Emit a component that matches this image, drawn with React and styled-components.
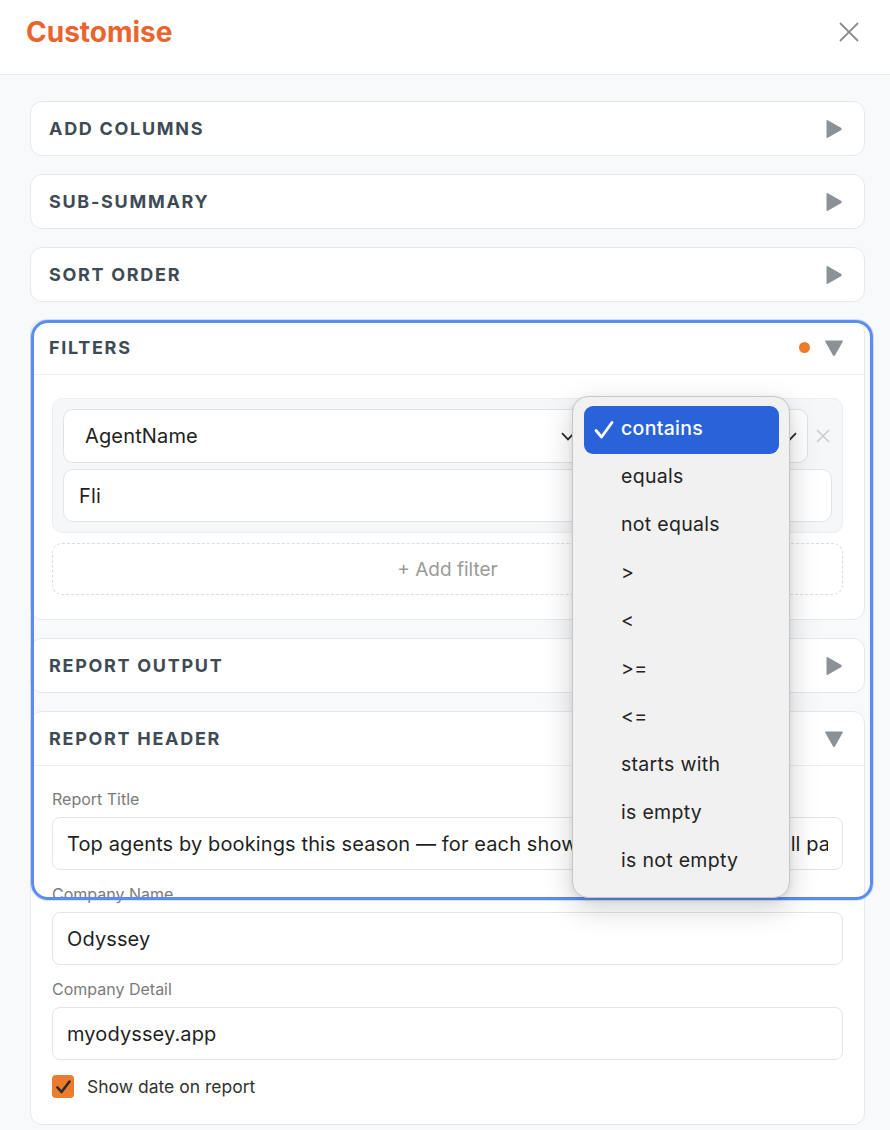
import React from "react";
import styled, { createGlobalStyle } from "styled-components";

const GlobalStyle = createGlobalStyle`
  html, body {
    margin: 0;
    padding: 0;
    background: #f8f9fb;
  }
  body {
    font-family: Inter, "Noto Sans", sans-serif;
    -webkit-font-smoothing: antialiased;
  }
  * {
    box-sizing: border-box;
  }
`;

const Drawer = styled.div`
  position: relative;
  width: 890px;
  height: 1130px;
  overflow: hidden;
  background: #f8f9fb;
`;

const TopBar = styled.header`
  height: 75px;
  display: flex;
  align-items: center;
  justify-content: space-between;
  padding: 0 31px 10px 26px;
  background: #ffffff;
  border-bottom: 1px solid #e9ebef;
`;

const Title = styled.h1`
  margin: 0;
  font-size: 28px;
  font-weight: 700;
  color: #e9652d;
`;

const CloseButton = styled.button`
  border: 0;
  background: none;
  padding: 0;
  display: flex;
  color: #8b8d90;
`;

const Body = styled.div`
  display: flex;
  flex-direction: column;
  gap: 18px;
  padding: 26px 25px 30px 30px;
`;

const Card = styled.section`
  background: #ffffff;
  border: 1px solid #e6e8ec;
  border-radius: 12px;
`;

const CardHead = styled.div`
  height: ${(p) => (p.$open ? "54px" : "53px")};
  display: flex;
  align-items: center;
  padding: 0 20px 0 18px;
  border-bottom: ${(p) => (p.$open ? "1px solid #eceef1" : "0")};
`;

const CardTitle = styled.h2`
  flex: 1;
  margin: 0;
  font-size: 18px;
  font-weight: 700;
  letter-spacing: 1.7px;
  color: #3e4b55;
`;

const Dot = styled.span`
  width: 11px;
  height: 11px;
  border-radius: 50%;
  background: #f07a2b;
  margin-right: 14px;
`;

const CardBody = styled.div`
  padding: ${(p) => p.$pad};
`;

const FilterBox = styled.div`
  display: flex;
  flex-direction: column;
  gap: 6px;
  padding: 10px;
  background: #f6f7f9;
  border: 1px solid #eceef1;
  border-radius: 10px;
`;

const FilterRow = styled.div`
  display: flex;
  align-items: center;
  gap: 6px;
`;

const SelectBox = styled.div`
  flex: ${(p) => (p.$width ? `0 0 ${p.$width}px` : "1")};
  height: 54px;
  display: flex;
  align-items: center;
  justify-content: space-between;
  padding: 0 10px 0 21px;
  background: #ffffff;
  border: 1px solid #dfe2e7;
  border-radius: 10px;
  font-size: 20px;
  letter-spacing: 0.15px;
  color: #222222;
`;

const RemoveButton = styled.button`
  flex: 0 0 18px;
  border: 0;
  background: none;
  padding: 0;
  display: flex;
  justify-content: center;
  color: #c9ccd0;
`;

const TextInput = styled.input`
  width: 100%;
  height: 53px;
  padding: 0 ${(p) => p.$pad || 14}px;
  background: #ffffff;
  border: 1px solid #e1e4e9;
  border-radius: ${(p) => p.$radius || 8}px;
  font-family: inherit;
  font-size: 20px;
  letter-spacing: 0.12px;
  color: #1f1f1f;
  outline: none;
`;

const AddFilter = styled.button`
  width: 100%;
  height: 52px;
  margin-top: 10px;
  background: #ffffff;
  border: 1px dashed #d9dce1;
  border-radius: 10px;
  font-family: inherit;
  font-size: 19px;
  color: #9a9a9a;
`;

const Field = styled.label`
  display: flex;
  flex-direction: column;
  gap: 8px;
`;

const FieldLabel = styled.span`
  font-size: 16px;
  line-height: 20px;
  color: #7b7b7b;
`;

const Fields = styled.div`
  display: flex;
  flex-direction: column;
  gap: 14px;
`;

const CheckRow = styled.label`
  display: flex;
  align-items: center;
  gap: 13px;
  margin-top: 15px;
  font-size: 17.5px;
  color: #333333;
`;

const CheckBox = styled.span`
  width: 22px;
  height: 23px;
  border-radius: 4px;
  background: #ec7a2f;
  display: flex;
  align-items: center;
  justify-content: center;
`;

const FocusRing = styled.div`
  position: absolute;
  top: 320px;
  left: 31px;
  width: 842px;
  height: 580px;
  border: 3px solid #5a8df0;
  border-radius: 17px;
  box-shadow: 0 0 0 1px rgba(90, 141, 240, 0.25);
  pointer-events: none;
`;

const Menu = styled.ul`
  position: absolute;
  top: 396px;
  left: 572px;
  width: 218px;
  margin: 0;
  padding: 9px 10px 11px 11px;
  list-style: none;
  background: #f1f1f1;
  border: 1px solid #c6c6c6;
  border-radius: 16px;
  box-shadow: 0 10px 30px rgba(0, 0, 0, 0.18), 0 2px 6px rgba(0, 0, 0, 0.08);
`;

const MenuItem = styled.li`
  position: relative;
  height: 48px;
  display: flex;
  align-items: center;
  padding: 0 0 5px 37px;
  border-radius: 9px;
  font-size: 19.5px;
  letter-spacing: 0.3px;
  font-weight: ${(p) => (p.$active ? 500 : 400)};
  color: ${(p) => (p.$active ? "#ffffff" : "#232323")};
  background: ${(p) => (p.$active ? "#2a63d9" : "transparent")};
  svg {
    position: absolute;
    left: 10px;
    top: 14px;
  }
`;

const Caret = ({ open }) => (
  <svg width="20" height="20" viewBox="0 0 20 20">
    {open ? (
      <path d="M2 2.5 H18 Q19.5 2.5 18.7 3.8 L11.2 17 Q10 18.8 8.8 17 L1.3 3.8 Q0.5 2.5 2 2.5 Z" fill="#8a9297" />
    ) : (
      <path d="M2.5 2 V18 Q2.5 19.5 3.8 18.7 L17 11.2 Q18.8 10 17 8.8 L3.8 1.3 Q2.5 0.5 2.5 2 Z" fill="#8a9297" />
    )}
  </svg>
);

const Chevron = () => (
  <svg width="14" height="9" viewBox="0 0 14 9">
    <path d="M1 1.2 L7 7.4 L13 1.2" fill="none" stroke="#2a2a2a" strokeWidth="1.8" />
  </svg>
);

const Section = ({ title, open, dot, pad, children }) => (
  <Card>
    <CardHead $open={open}>
      <CardTitle>{title}</CardTitle>
      {dot && <Dot />}
      <Caret open={open} />
    </CardHead>
    {open && <CardBody $pad={pad}>{children}</CardBody>}
  </Card>
);

const operators = [
  "contains",
  "equals",
  "not equals",
  ">",
  "<",
  ">=",
  "<=",
  "starts with",
  "is empty",
  "is not empty",
];

export default function App() {
  return (
    <Drawer>
      <GlobalStyle />
      <TopBar>
        <Title>Customise</Title>
        <CloseButton aria-label="Close">
          <svg width="20" height="20" viewBox="0 0 20 20">
            <path d="M1 1 L19 19 M19 1 L1 19" stroke="currentColor" strokeWidth="1.8" />
          </svg>
        </CloseButton>
      </TopBar>

      <Body>
        <Section title="ADD COLUMNS" />
        <Section title="SUB-SUMMARY" />
        <Section title="SORT ORDER" />
        <Section title="FILTERS" open dot pad="23px 21px 24px 21px">
          <FilterBox>
            <FilterRow>
              <SelectBox>
                AgentName
                <Chevron />
              </SelectBox>
              <SelectBox $width={216}>
                contains
                <Chevron />
              </SelectBox>
              <RemoveButton aria-label="Remove filter">
                <svg width="14" height="14" viewBox="0 0 14 14">
                  <path d="M1 1 L13 13 M13 1 L1 13" stroke="currentColor" strokeWidth="1.6" />
                </svg>
              </RemoveButton>
            </FilterRow>
            <TextInput defaultValue="Fli" $pad={15} $radius={10} />
          </FilterBox>
          <AddFilter>+ Add filter</AddFilter>
        </Section>
        <Section title="REPORT OUTPUT" />
        <Section title="REPORT HEADER" open pad="23px 21px 26px 21px">
          <Fields>
            <Field>
              <FieldLabel>Report Title</FieldLabel>
              <TextInput defaultValue="Top agents by bookings this season — for each show, ranked by their overall pax and revenue" />
            </Field>
            <Field>
              <FieldLabel>Company Name</FieldLabel>
              <TextInput defaultValue="Odyssey" />
            </Field>
            <Field>
              <FieldLabel>Company Detail</FieldLabel>
              <TextInput defaultValue="myodyssey.app" />
            </Field>
          </Fields>
          <CheckRow>
            <CheckBox>
              <svg width="15" height="14" viewBox="0 0 15 14">
                <path d="M1.5 7.5 L5.5 12 L13.5 1.5" fill="none" stroke="#2b2b2b" strokeWidth="2.6" strokeLinecap="round" strokeLinejoin="round" />
              </svg>
            </CheckBox>
            Show date on report
          </CheckRow>
        </Section>
      </Body>

      <FocusRing />

      <Menu role="listbox">
        {operators.map((op, i) => (
          <MenuItem key={op} $active={i === 0}>
            {i === 0 && (
              <svg width="20" height="20" viewBox="0 0 20 20">
                <path d="M2 10.5 L7.5 17 L18 2.5" fill="none" stroke="#ffffff" strokeWidth="2.8" strokeLinecap="round" strokeLinejoin="round" />
              </svg>
            )}
            {op}
          </MenuItem>
        ))}
      </Menu>
    </Drawer>
  );
}
